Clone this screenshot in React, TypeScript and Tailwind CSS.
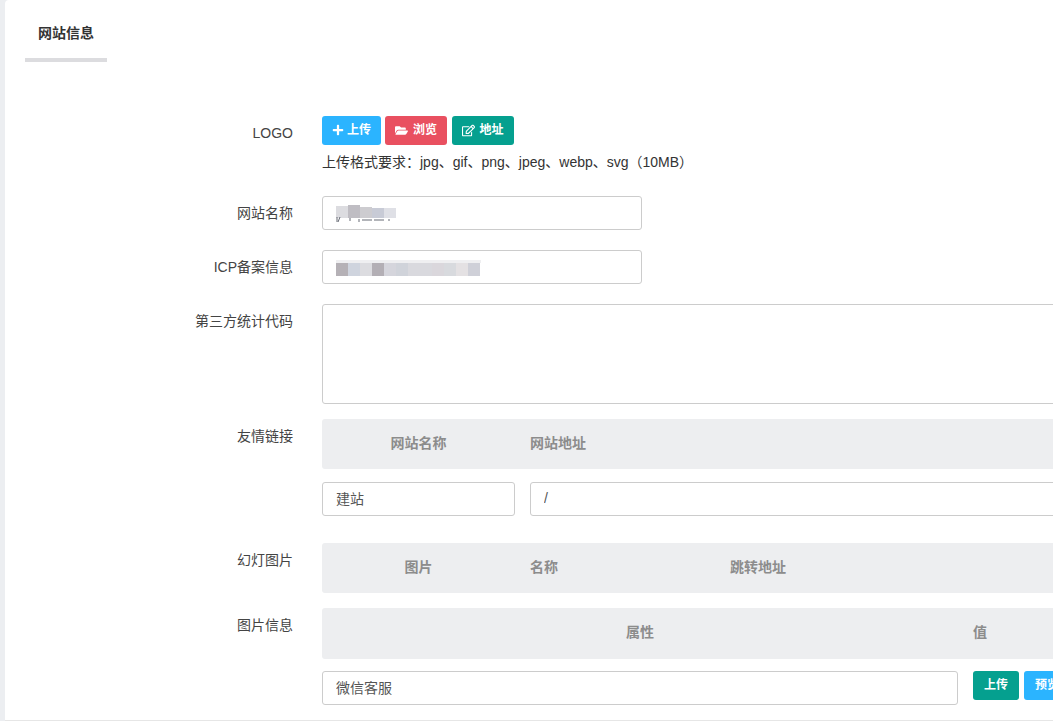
import { FaFolderOpen, FaPlus, FaRegEdit } from "react-icons/fa";

const font = "font-['Liberation_Sans','Noto_Sans_CJK_SC',sans-serif]";
const inputCls =
  "block h-[34px] rounded-[3px] border border-[#cccccc] bg-white px-[13px] pb-[2px] text-sm text-[#555555] outline-none";

const nameCells = [
  [0, 6, "#dcdce0"],
  [12, 5, "#bfbdc3"],
  [24, 7, "#cdccd0"],
  [36, 8, "#c8cbd6"],
  [48, 8, "#dfe0e6"],
] as const;

const icpCells = [
  "#b5b1b6", "#cfd4de", "#dcdce0", "#b3afb5", "#d5d5dc", "#d0d3da",
  "#d9d9de", "#d9d9de", "#dad7dc", "#d8dade", "#e4e1e3", "#cfd0d8",
];

const Label = ({ children }: { children: string }) => (
  <div className="w-[288px] flex-none pt-[7px] text-right text-sm leading-5 text-[#444444]">
    {children}
  </div>
);

const Row = ({ label, className, children }: { label: string; className: string; children: React.ReactNode }) => (
  <div className={`flex gap-[29px] ${className}`}>
    <Label>{label}</Label>
    <div className="w-[900px] flex-none">{children}</div>
  </div>
);

const Head = ({ className, children }: { className: string; children: React.ReactNode }) => (
  <div className={`flex items-center gap-[15px] rounded-[3px] bg-[#edeef0] text-sm font-bold text-[#8c8c8c] ${className}`}>
    {children}
  </div>
);

const App = () => {
  return (
    <div className={`h-[725px] w-[1053px] overflow-hidden bg-white ${font}`}>
      <div className="h-[721px] bg-[#eceef1] pl-[5px]">
        <div className="h-full rounded-tl-[4px] border-b border-[#e6e6e6] bg-white">
          <div className="ml-5 flex h-[62px] w-[82px] items-center border-b-4 border-[#dcdcdf] px-[13px] pt-[8px] text-sm font-bold text-[#333333]">
            网站信息
          </div>

          <div className="pt-[54px]">
            <Row label="LOGO" className="mb-5">
              <div className="flex text-xs font-bold text-white">
                <button className="flex h-[29px] w-[59px] items-center justify-center gap-[3px] rounded-[3px] bg-[#2bb4ff] pb-[2px]">
                  <FaPlus className="mt-px text-[12px]" />
                  上传
                </button>
                <button className="ml-1 flex h-[29px] w-[62px] items-center justify-center gap-[5px] rounded-[3px] bg-[#e95060] pb-[2px]">
                  <FaFolderOpen className="mt-px text-[13px]" />
                  浏览
                </button>
                <button className="ml-[5px] flex h-[29px] w-[62px] items-center justify-center gap-1 rounded-[3px] bg-[#05a08f] pb-[2px]">
                  <FaRegEdit className="mt-px text-[13px]" />
                  地址
                </button>
              </div>
              <div className="mt-[7px] pb-1 text-sm leading-5 text-[#333333]">
                上传格式要求：jpg、gif、png、jpeg、webp、svg（10MB）
              </div>
            </Row>

            <Row label="网站名称" className="mb-5">
              <div className="flex h-[34px] w-[320px] items-center rounded-[3px] border border-[#cccccc] pl-[13px]">
                <svg width="60" height="18" className="mt-px">
                  {nameCells.map(([x, y, fill]) => (
                    <rect key={x} x={x} y={y - 5} width="12" height={13 - y + 5} fill={fill} />
                  ))}
                  <path d="M1 12v5M4 12l-2 5M14 13v3M23 14v3M26 15h10M38 15h10M52 15h2" stroke="#666a75" strokeWidth="1" />
                </svg>
              </div>
            </Row>

            <Row label="ICP备案信息" className="mb-5">
              <div className="flex h-[34px] w-[320px] items-center rounded-[3px] border border-[#cccccc] pl-[13px]">
                <svg width="145" height="16" className="mt-px">
                  <rect x="0" y="0" width="145" height="3" fill="#efeff1" />
                  {icpCells.map((fill, i) => (
                    <rect key={i} x={i * 12} y="3" width="12" height="13" fill={fill} />
                  ))}
                </svg>
              </div>
            </Row>

            <Row label="第三方统计代码" className="mb-[15px]">
              <textarea readOnly className={`${inputCls} h-[100px] w-full resize-none`} />
            </Row>

            <Row label="友情链接" className="mb-[27px]">
              <Head className="h-[50px] pb-[2px]">
                <div className="w-[193px] text-center">网站名称</div>
                <div>网站地址</div>
              </Head>
              <div className="mt-[13px] flex gap-[15px]">
                <input readOnly defaultValue="建站" className={`${inputCls} w-[193px]`} />
                <input readOnly defaultValue="/" className={`${inputCls} flex-1`} />
              </div>
            </Row>

            <Row label="幻灯图片" className="mb-[15px]">
              <Head className="h-[50px] pb-[2px]">
                <div className="w-[193px] text-center">图片</div>
                <div className="w-[185px]">名称</div>
                <div>跳转地址</div>
              </Head>
            </Row>

            <Row label="图片信息" className="mb-0">
              <Head className="h-[51px] pb-[3px]">
                <div className="w-[636px] text-center">属性</div>
                <div>值</div>
              </Head>
              <div className="mt-3 flex gap-[15px]">
                <input readOnly defaultValue="微信客服" className={`${inputCls} w-[636px]`} />
                <div className="flex gap-[5px] text-xs font-bold text-white">
                  <button className="h-[29px] w-[46px] rounded-[3px] bg-[#05a08f] pb-[2px]">上传</button>
                  <button className="h-[29px] w-[46px] rounded-[3px] bg-[#2bb4ff] pb-[2px]">预览</button>
                </div>
              </div>
            </Row>
          </div>
        </div>
      </div>
    </div>
  );
};

export default App;
